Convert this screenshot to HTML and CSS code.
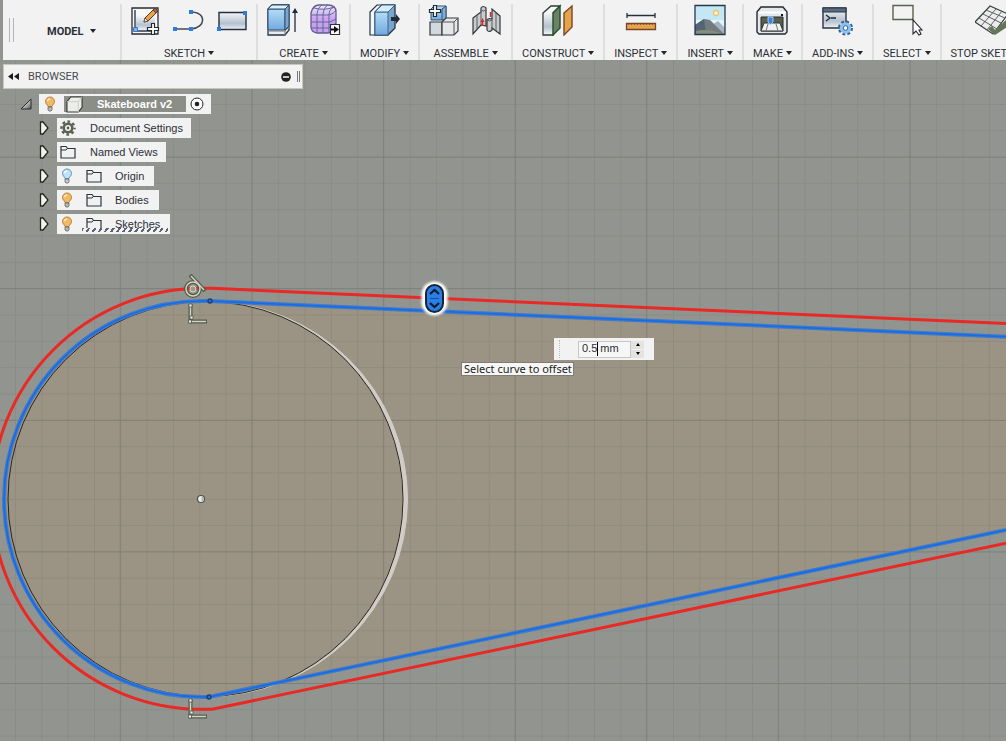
FILE: index.html
```html
<!DOCTYPE html>
<html lang="en">
<head>
<meta charset="utf-8">
<title>Skateboard v2</title>
<link rel="stylesheet" href="styles.css">
</head>
<body>
<svg class="defs" aria-hidden="true">
  <defs>
    <linearGradient id="steel" x1="0" y1="0" x2="0" y2="1"><stop offset="0" stop-color="#f4f6f8"/><stop offset=".65" stop-color="#b4c1ce"/><stop offset="1" stop-color="#eef2f5"/></linearGradient>
    <linearGradient id="blue" x1="0" y1="0" x2="0" y2="1"><stop offset="0" stop-color="#b4dcf5"/><stop offset="1" stop-color="#71aade"/></linearGradient>
    <linearGradient id="violet" x1="0" y1="0" x2="0" y2="1"><stop offset="0" stop-color="#f0e6fb"/><stop offset=".5" stop-color="#cba0ef"/><stop offset="1" stop-color="#c99df0"/></linearGradient>
    <linearGradient id="corner" x1="0" y1="0" x2="1" y2="1"><stop offset=".3" stop-color="#eee"/><stop offset="1" stop-color="#555"/></linearGradient>
    <symbol id="caret" viewBox="0 0 6 4"><path d="M0 0h6L3 4z" fill="#23262b"/></symbol>
    <symbol id="expand" viewBox="0 0 11 14"><path d="M1.500 1h2.500l5 6-5 6H1.500z" fill="#f2f2ec" stroke="#25261f" stroke-width="1.300"/></symbol>
    <symbol id="folder" viewBox="0 0 16 14"><path d="M1 13V1.500h5l1.500 2H15V13z" fill="#eef2f0" stroke="#30343e" stroke-width="1.200"/><path d="M1 5h5l1.500-1.500" fill="none" stroke="#30343e"/></symbol>
    <symbol id="bulb" viewBox="0 0 12 16"><path d="M6 1a4.500 4.500 0 0 0-4.500 4.500c0 2.300 2 3 2.500 5h4c.5-2 2.500-2.700 2.500-5A4.500 4.500 0 0 0 6 1z" fill="#f3b862" stroke="#b9803c"/><path d="M3.500 5Q4 3 6 3" fill="none" stroke="#fff2d5" stroke-width="1.500"/><path d="M4 11h4v3l-1 1H5l-1-1z" fill="#b8b8b8" stroke="#666" stroke-width=".8"/></symbol>
    <symbol id="bulb-off" viewBox="0 0 12 16"><path d="M6 1a4.500 4.500 0 0 0-4.500 4.500c0 2.300 2 3 2.500 5h4c.5-2 2.500-2.700 2.500-5A4.500 4.500 0 0 0 6 1z" fill="#bfe3fa" stroke="#5f93b8"/><path d="M3.500 5Q4 3 6 3" fill="none" stroke="#fff" stroke-width="1.500"/><path d="M4 11h4v3l-1 1H5l-1-1z" fill="#c8c8c8" stroke="#666" stroke-width=".8"/></symbol>
  </defs>
</svg>

<header class="toolbar">
  <div class="mode">
    <span class="grip"></span>
    <button class="mode-button" type="button">MODEL <svg class="caret"><use href="#caret"/></svg></button>
  </div>

  <div class="group">
    <div class="tools">
      <button class="tool" type="button" aria-label="Create sketch"><svg viewBox="0 0 32 32">
        <path d="M2 4h26v26H2z" fill="#f7f8f8" stroke="#2a2c30" stroke-width="1.300"/><path d="M6 12h19v14H6z" fill="url(#steel)"/><path d="M5 6v21h16" fill="none" stroke="#2c3b55" stroke-width="1.400"/><path d="M3.500 23.500h4v4h-4z" fill="#7fb2ee" stroke="#3877cf"/>
        <path d="M14 18l1-4L25 4l3 3-10 10z" fill="#e7a548" stroke="#4b3621"/><path d="M14 18l1-4 3 3z" fill="#fff2df" stroke="#4b3621" stroke-width=".7"/><path d="M23 6l2-2 3 3-2 2z" fill="#9d6559" stroke="#59322c" stroke-width=".8"/>
        <path d="M21.500 19.500h3v4h4v3h-4v4h-3v-4h-4v-3h4z" fill="#fff" stroke="#24272c" stroke-width="1.200"/></svg></button>
      <button class="tool" type="button" aria-label="Line"><svg viewBox="0 0 32 32">
        <path d="M2 25h16c15-1 16-17 0-17" fill="none" stroke="#414955" stroke-width="1.500"/><path d="M0 23h4v4H0zM16 23h4v4h-4zM16 6h4v4h-4z" fill="#2b7be0"/></svg></button>
      <button class="tool" type="button" aria-label="Rectangle"><svg viewBox="0 0 32 32">
        <path d="M3 8.500h27v17H3z" fill="url(#steel)" stroke="#26303c" stroke-width="1.400"/><path d="M1 23h4v4H1zM27 7h4v4h-4z" fill="#2b7be0"/></svg></button>
    </div>
    <button class="label" type="button">SKETCH <svg class="caret"><use href="#caret"/></svg></button>
  </div>

  <div class="group">
    <div class="tools">
      <button class="tool" type="button" aria-label="Extrude"><svg viewBox="0 0 32 32">
        <path d="M2 5l4-4h17v25l-4 5H2z" fill="#e9edf0" stroke="#243348" stroke-width="1.300"/><path d="M2 5h17v21H2z" fill="url(#blue)" stroke="#2d4d70"/><path d="M2 5l4-4h17l-4 4z" fill="#dff1fb" stroke="#2d4d70"/><path d="M19 5l4-4v21l-4 4z" fill="#7ca5cc" stroke="#2d4d70"/><path d="M2 27h17v4M19 27l4-4" fill="none" stroke="#777"/>
        <path d="M29 28V6" stroke="#1f2c40" stroke-width="1.300"/><path d="M26 9l3-5 3 5z" fill="#1f2c40"/></svg></button>
      <button class="tool" type="button" aria-label="Create form"><svg viewBox="0 0 32 32">
        <path d="M2 9q2-8 8-8h9q8 0 8 7v12q0 8-8 9H8q-6-1-6-6z" fill="url(#violet)" stroke="#655a92" stroke-width="1.300"/><path d="M2 11h18q5-1 7-5M2 18h19l6-3M2 24h18l7-5M8 28V10q1-7 5-9M14 29V10q1-7 5-9M20 28V11q0-6 5-8M5 4q10 3 20-1" fill="none" stroke="#5c6b97"/>
        <path d="M21.500 20.500h9v10h-9z" fill="#fff" stroke="#2b303b" stroke-width="1.200"/><path d="M22 24.500h3v-2.500l5 3.500-5 3.500V26.500h-3z" fill="#111"/></svg></button>
    </div>
    <button class="label" type="button">CREATE <svg class="caret"><use href="#caret"/></svg></button>
  </div>

  <div class="group">
    <div class="tools">
      <button class="tool" type="button" aria-label="Press pull"><svg viewBox="0 0 32 32">
        <path d="M1 8l7-7h5v23l-6 7H1z" fill="#f5f6f6" stroke="#243348" stroke-width="1.200"/><path d="M6 8l7-7h13v23l-7 7H6z" fill="#79a5ce" stroke="#243348" stroke-width="1.300"/><path d="M6 8h13v23H6z" fill="url(#blue)" stroke="#3c668f"/><path d="M6 8l7-7h13l-7 7z" fill="#d5ecf9" stroke="#3c668f"/><path d="M22 13h5v-3l4 5-4 5v-3h-5z" fill="#222b38"/></svg></button>
    </div>
    <button class="label" type="button">MODIFY <svg class="caret"><use href="#caret"/></svg></button>
  </div>

  <div class="group">
    <div class="tools">
      <button class="tool" type="button" aria-label="New component"><svg viewBox="0 0 32 32">
        <path d="M3 5l3-3h12v14H3z" fill="url(#blue)" stroke="#33506e"/><path d="M14 5l4-3v14h-4z" fill="#81add6" stroke="#33506e"/><path d="M2 18h12v13H2z" fill="#d3d8dc" stroke="#343b42" stroke-width="1.200"/><path d="M14 18l4-4h12v13l-4 4H14z" fill="#e5e7e8" stroke="#343b42" stroke-width="1.200"/><path d="M14 18h12v13M26 18l4-4" fill="none" stroke="#555"/>
        <path d="M5.500 1.500h3v4h4v3h-4v4h-3v-4h-4v-3h4z" fill="#fff" stroke="#24272c" stroke-width="1.200"/></svg></button>
      <button class="tool" type="button" aria-label="Joint"><svg viewBox="0 0 32 32">
        <path d="M2 14l8-6V4q2-3 5 0v18l-5-1-8 9z" fill="#c9cccd" stroke="#34383c" stroke-width="1.200"/><path d="M6 11v15M10 8v13M15 6q-3 2-5 0" fill="none" stroke="#5a5e61"/><path d="M29 12l-8-7v10q-4-1-5 1v10q2 3 5 0v-2l8 6z" fill="#c9cccd" stroke="#34383c" stroke-width="1.200"/><path d="M21 14v10M25 9v18M16 16q3 2 5 0" fill="none" stroke="#5a5e61"/><path d="M11.500 22v-5M19.500 13V8" stroke="#e12626" stroke-width="1.500"/><path d="M9.500 18l2-4 2 4z" fill="#e12626"/></svg></button>
    </div>
    <button class="label" type="button">ASSEMBLE <svg class="caret"><use href="#caret"/></svg></button>
  </div>

  <div class="group">
    <div class="tools">
      <button class="tool" type="button" aria-label="Offset plane"><svg viewBox="0 0 32 32">
        <path d="M1 9l8-7h9l-7 7v22H1z" fill="#f6f7f7" stroke="#2d3831" stroke-width="1.300"/><path d="M2 9h9v21H2z" fill="url(#steel)"/><path d="M11 9l7-7v22l-7 7z" fill="#6f8068" stroke="#245528" stroke-width="1.500"/><path d="M22 9l8-7v21l-8 8z" fill="#e4a449" stroke="#7e432c" stroke-width="1.400"/></svg></button>
    </div>
    <button class="label" type="button">CONSTRUCT <svg class="caret"><use href="#caret"/></svg></button>
  </div>

  <div class="group">
    <div class="tools">
      <button class="tool" type="button" aria-label="Measure"><svg viewBox="0 0 32 32">
        <path d="M2 11.500h28M2 9v5M30 9v5" fill="none" stroke="#29303a" stroke-width="1.300"/><path d="M1.500 19.500h29v6h-29z" fill="#e5a64b" stroke="#7b432b" stroke-width="1.300"/><path d="M3 20.500h27" stroke="#8d552f" stroke-dasharray="1 2"/></svg></button>
    </div>
    <button class="label" type="button">INSPECT <svg class="caret"><use href="#caret"/></svg></button>
  </div>

  <div class="group">
    <div class="tools">
      <button class="tool" type="button" aria-label="Insert image"><svg viewBox="0 0 32 32">
        <path d="M1 1.500h30v29H1z" fill="#c4e7f5"/><path d="M2 16h28v10H2z" fill="#e4f5fa"/><circle cx="22" cy="9" r="2.500" fill="#fff6d8" stroke="#f1c36b" stroke-width="1.300"/><path d="M16 22l8-5 7 7v7H16z" fill="#a8b4bf"/><path d="M1 21l9-6 6 1 14 14H1z" fill="#737b82"/><path d="M1 21l9-6 2 15H1z" fill="#536477"/><path d="M2 27q12-3 27 3H2z" fill="#849077"/><path d="M1 1.500h30v29H1z" fill="none" stroke="#27384d" stroke-width="1.300"/></svg></button>
    </div>
    <button class="label" type="button">INSERT <svg class="caret"><use href="#caret"/></svg></button>
  </div>

  <div class="group">
    <div class="tools">
      <button class="tool" type="button" aria-label="3D print"><svg viewBox="0 0 32 32">
        <path d="M1 8l4-5h22l4 5v20l-2 2H3l-2-2z" fill="#e5e8ea" stroke="#252a31" stroke-width="1.400"/><path d="M2 8.500h28" stroke="#fff" stroke-width="2"/><path d="M25 10h2v2h-2z" fill="#111"/><path d="M5 13h22v14H5z" fill="#56604f" stroke="#24282b"/><path d="M8 19h16l3 8H5z" fill="#eef1f2" stroke="#333"/><path d="M12 20l-2 7M20 20l2 7" stroke="#777"/><path d="M12 13h5v5l-2.500 3-2.500-3z" fill="#3687e5" stroke="#d4eaff" stroke-width=".7"/></svg></button>
    </div>
    <button class="label" type="button">MAKE <svg class="caret"><use href="#caret"/></svg></button>
  </div>

  <div class="group">
    <div class="tools">
      <button class="tool" type="button" aria-label="Scripts and add-ins"><svg viewBox="0 0 32 32">
        <path d="M2 4h23v20H2z" fill="url(#steel)" stroke="#2b3542" stroke-width="1.400"/><path d="M2 4h23v4H2z" fill="#5b6c82" stroke="#2b3542"/><path d="M5 11l4 3-4 3M10 14h5" fill="none" stroke="#1e2a3a" stroke-width="1.300"/><circle cx="24.500" cy="24" r="6" fill="none" stroke="#315f91" stroke-width="3" stroke-dasharray="2.700 2"/><circle cx="24.500" cy="24" r="4" fill="#eef6fc" stroke="#8cc3f1" stroke-width="3.500"/><circle cx="24.500" cy="24" r="2.300" fill="#fff" stroke="#315f91"/></svg></button>
    </div>
    <button class="label" type="button">ADD-INS <svg class="caret"><use href="#caret"/></svg></button>
  </div>

  <div class="group">
    <div class="tools">
      <button class="tool" type="button" aria-label="Select"><svg viewBox="0 0 32 32">
        <path d="M2 1.500h20v14H2z" fill="#f3f4f1" stroke="#5a6153" stroke-width="1.400"/><path d="M22 16v14l3-3 3 4 2-1-2-4h3z" fill="#fff" stroke="#24272c" stroke-width="1.100"/></svg></button>
    </div>
    <button class="label" type="button">SELECT <svg class="caret"><use href="#caret"/></svg></button>
  </div>

  <div class="group">
    <div class="tools">
      <button class="tool" type="button" aria-label="Stop sketch"><svg viewBox="0 0 32 32">
        <path d="M0 18L15 2l18 8-15 20z" fill="#ecedec" stroke="#3d4140" stroke-width="1.200"/><path d="M4 14l18 11M8 10l18 9M11 6l19 8M6 22L21 5M12 26L27 7" stroke="#5d6260" fill="none"/><path d="M13 25l4-3 3 4 12-11v8L20 31z" fill="#63755a"/></svg></button>
    </div>
    <button class="label" type="button">STOP SKETCH <svg class="caret"><use href="#caret"/></svg></button>
  </div>
</header>

<main class="workspace">
  <svg class="scene" viewBox="0 60 1006 681" preserveAspectRatio="xMinYMin slice" aria-label="Sketch canvas">
    <defs>
      <pattern id="minor" width="26.320" height="26.320" x="15" y="25" patternUnits="userSpaceOnUse"><path d="M0 .5h26.320M.5 0v26.320" stroke="#50554d" stroke-opacity=".13" fill="none"/></pattern>
      <pattern id="major" width="131.600" height="131.600" x="119.700" y="25" patternUnits="userSpaceOnUse"><path d="M0 .5h131.600M.5 0v131.600" stroke="#454a42" stroke-opacity=".2" fill="none"/></pattern>
      <filter id="glow" x="-50%" y="-50%" width="200%" height="200%"><feGaussianBlur stdDeviation="1"/></filter>
    </defs>
    <path d="M1006 337L209 301h-7a198 198 0 0 0 0 396h7l797-167z" fill="#9b9384"/>
    <rect y="60" width="1006" height="681" fill="url(#minor)"/>
    <rect y="60" width="1006" height="681" fill="url(#major)"/>
    <path d="M207 301.500A200.500 197.500 0 0 1 207 696.500A196 197.500 0 0 0 207 301.500z" fill="#d1ccc5" stroke="#d1ccc5"/>
    <circle cx="205.500" cy="499" r="197.500" fill="none" stroke="#2c241c"/>
    <path d="M1006 323.500L212 288.300h-10a210.500 210.500 0 0 0 0 421h10l794-166" fill="none" stroke="#e92925" stroke-width="3"/>
    <path d="M1006 336.700L209 301h-7a198 198 0 0 0 0 396h7l797-167" fill="none" stroke="#427bc2" stroke-width="4"/>
    <path d="M1006 336.700L209 301h-7a198 198 0 0 0 0 396h7l797-167" fill="none" stroke="#126bf2" stroke-width="1.500"/>
    <circle cx="201" cy="499" r="3.500" fill="#eee" stroke="#4f5148" stroke-width="1.200"/>
    <path d="M201.500 496.500v5a2.500 2.500 0 0 0 0-5z" fill="#b5b5b0"/>
    <g fill="none" stroke="#1d3d70" stroke-width="1.300"><circle cx="210" cy="301" r="2"/><circle cx="209" cy="697" r="2"/></g>
    <g fill="none" stroke="#535a48" stroke-width="4"><circle cx="193" cy="289" r="7"/><path d="M190 275l15 16"/></g>
    <g fill="none" stroke="#d2d4c4" stroke-width="1.500"><circle cx="193" cy="289" r="7"/><path d="M191 276l13 14"/></g>
    <circle cx="193" cy="289" r="3" fill="#9a9990" stroke="#d2d4c4"/>
    <g id="perp"><path d="M190.500 304v19M189 321.500h18" fill="none" stroke="#555b4b" stroke-width="4"/><path d="M190.500 305v14M192 321.500h14" fill="none" stroke="#d2d4c4" stroke-width="1.500"/><path d="M189 304h3v3h-3zM190 316h3v3h-3zM188.500 320h3v3h-3z" fill="#eee" stroke="#555b4b" stroke-width=".8"/></g>
    <use href="#perp" y="395"/>
    <rect x="421.500" y="281.500" width="26" height="34" rx="13" fill="#fff" filter="url(#glow)"/>
    <rect x="426" y="285" width="17" height="27" rx="8.500" fill="#2a7ee6" stroke="#172638" stroke-width="2"/>
    <path d="M430 294l4.500-4 4.500 4M430 303l4.500 4 4.500-4" fill="none" stroke="#101b2b" stroke-width="2.200"/><path d="M430 298.500h9" stroke="#1a4e91"/>
  </svg>

  <section class="browser">
    <div class="browser-head">
      <svg class="rewind" viewBox="0 0 11 7"><path d="M5 0v7L0 3.500zM11 0v7L6 3.500z" fill="#1c1c1c"/></svg>
      <h2 class="browser-title">BROWSER</h2>
      <button class="minimise" type="button" aria-label="Minimise"><svg viewBox="0 0 10 10"><circle cx="5" cy="5" r="4.800" fill="#222"/><path d="M2 5h6" stroke="#fff" stroke-width="1.500"/></svg></button>
      <span class="resize"></span>
    </div>
    <ul class="tree">
      <li class="row root">
        <svg class="open" viewBox="0 0 12 12"><path d="M11 1v10H1z" fill="url(#corner)" stroke="#2a2a2a"/></svg>
        <div class="item">
          <svg class="bulb"><use href="#bulb"/></svg>
          <span class="selected"><svg class="cube" viewBox="0 0 18 18"><path d="M1 6l4-5h12v11l-4 5H1z" fill="#eceeea" stroke="#35383a" stroke-width="1.200"/><path d="M1 6h12v11M13 6l4-5" fill="none" stroke="#c9ccc8"/></svg><span class="document">Skateboard v2</span></span>
          <svg class="radio" viewBox="0 0 14 14"><circle cx="7" cy="7" r="6" fill="#fff" stroke="#222"/><circle cx="7" cy="7" r="2.300" fill="#222"/></svg>
        </div>
      </li>
      <li class="row"><svg class="expand"><use href="#expand"/></svg><div class="item"><svg class="gear" viewBox="0 0 16 16"><circle cx="8" cy="8" r="6.500" fill="none" stroke="#5b6354" stroke-width="2.500" stroke-dasharray="2.600 2.505" stroke-dashoffset="1.300"/><circle cx="8" cy="8" r="4.300" fill="#f2f2f2" stroke="#5b6354" stroke-width="2.600"/><circle cx="8" cy="8" r="1.400" fill="#5b6354"/></svg><span>Document Settings</span></div></li>
      <li class="row"><svg class="expand"><use href="#expand"/></svg><div class="item"><svg class="folder"><use href="#folder"/></svg><span>Named Views</span></div></li>
      <li class="row"><svg class="expand"><use href="#expand"/></svg><div class="item lit"><svg class="bulb"><use href="#bulb-off"/></svg><svg class="folder"><use href="#folder"/></svg><span>Origin</span></div></li>
      <li class="row"><svg class="expand"><use href="#expand"/></svg><div class="item lit"><svg class="bulb"><use href="#bulb"/></svg><svg class="folder"><use href="#folder"/></svg><span>Bodies</span></div></li>
      <li class="row"><svg class="expand"><use href="#expand"/></svg><div class="item lit active"><svg class="bulb"><use href="#bulb"/></svg><svg class="folder"><use href="#folder"/></svg><span>Sketches</span></div></li>
    </ul>
  </section>

  <div class="offset">
    <span class="dots"></span>
    <div class="field">
      <input class="value" type="text" value="0.5 mm" aria-label="Offset distance"><span class="cursor"></span>
    </div>
    <div class="spin">
      <button class="step" type="button" aria-label="Increase"><svg viewBox="0 0 4 3"><path d="M0 3h4L2 0z"/></svg></button>
      <button class="step" type="button" aria-label="Decrease"><svg viewBox="0 0 4 3"><path d="M0 0h4L2 3z"/></svg></button>
    </div>
  </div>
  <div class="tooltip" role="tooltip">Select curve to offset</div>
</main>
</body>
</html>
```
FILE: styles.css
```css
* { box-sizing: border-box; }

body {
  margin: 0;
  min-height: 100vh;
  display: flex;
  flex-direction: column;
  overflow: hidden;
  background: #92958f;
  color: #2b2f36;
  font-family: "Liberation Sans", Arial, sans-serif;
  font-size: 11px;
}

button {
  margin: 0;
  padding: 0;
  border: 0;
  background: none;
  color: inherit;
  font: inherit;
}

svg { display: block; flex: none; }
.defs { position: absolute; width: 0; height: 0; }

/* Toolbar */
.toolbar {
  display: flex;
  margin-left: 3px;
  padding: 4px 0 0;
  overflow: hidden;
  background: #f2f2f2;
  font-family: Roboto, sans-serif;
}

.mode {
  flex: none;
  display: flex;
  align-items: center;
  width: 117px;
  padding: 0 0 4px 6px;
}

.grip {
  width: 5px;
  height: 24px;
  border: solid #b4b4b4;
  border-width: 0 1px;
}

.mode-button {
  display: flex;
  align-items: center;
  gap: 6px;
  margin-left: 33px;
  padding-top: 2px;
  font-weight: 700;
}

.group {
  flex: none;
  display: flex;
  flex-direction: column;
  align-items: center;
  gap: 8px;
  padding: 0 8px;
  border-left: 2px solid #dedede;
}

.tools { display: flex; gap: 11px; }
.tool svg { width: 32px; height: 32px; }

.label {
  display: flex;
  align-items: center;
  gap: 3px;
  height: 16px;
  padding: 2px 1px 0;
  white-space: nowrap;
}

.caret { width: 6px; height: 4px; }

/* Canvas */
.workspace {
  position: relative;
  flex: 1;
  overflow: hidden;
  padding: 4px 3px;
}

.scene {
  position: absolute;
  inset: 0;
  width: 100%;
  height: 100%;
}

/* Browser panel */
.browser { position: relative; width: 300px; }

.browser-head {
  display: flex;
  align-items: center;
  height: 25px;
  padding: 0 2px 0 4px;
  border: 1px solid #c9c6bb;
  background: #f2f2f2;
}

.rewind { width: 11px; height: 7px; }

.browser-title {
  flex: 1;
  margin: 0 0 0 9px;
  color: #4a4c4e;
  font-family: Roboto, sans-serif;
  font-size: 11px;
  font-weight: 400;
}

.minimise svg { width: 10px; height: 10px; }

.resize {
  width: 3px;
  height: 11px;
  margin-left: 6px;
  border: solid #777;
  border-width: 0 1px;
}

.tree {
  display: flex;
  flex-direction: column;
  gap: 4px;
  margin: 5px 0 0;
  padding: 0;
  list-style: none;
}

.row {
  display: flex;
  align-items: center;
  gap: 7px;
  padding-left: 36px;
}

.root { padding-left: 17px; }
.open { width: 12px; height: 12px; }
.expand { width: 11px; height: 14px; }

.item {
  display: flex;
  align-items: center;
  gap: 14px;
  height: 20px;
  padding: 0 8px 0 3px;
  background: #f2f2f2;
}

.lit { gap: 13px; padding: 0 10px 0 4px; }
.root .item { gap: 4px; padding: 0 7px 0 5px; }
.root .bulb { margin-right: 4px; }

.bulb { width: 12px; height: 16px; }
.gear { width: 16px; height: 16px; }
.folder { width: 16px; height: 14px; }
.cube { width: 17px; height: 17px; }
.radio { width: 14px; height: 14px; }

.selected {
  display: flex;
  align-items: center;
  gap: 14px;
  height: 16px;
  padding: 0 14px 0 2px;
  background: #8b8d87;
  color: #fff;
  font-weight: 700;
}

.active { position: relative; }
.active::after {
  content: "";
  position: absolute;
  right: 2px;
  bottom: 2px;
  left: 25px;
  height: 4px;
  background: repeating-linear-gradient(125deg, #5b6272 0 2px, #f2f2f2 2px 5px);
}

/* Floating offset input */
.offset {
  position: absolute;
  top: 278px;
  left: 554px;
  display: flex;
  align-items: center;
  width: 100px;
  height: 22px;
  padding-left: 5px;
  background: #f2f2f2;
}

.dots {
  width: 2px;
  height: 18px;
  margin-right: 17px;
  border-left: 1px dotted #bbb;
}

.field { position: relative; }

.value {
  display: block;
  width: 53px;
  height: 17px;
  padding: 0 3px 2px;
  border: 1px solid #c6c6c2;
  background: #f6f6f6;
  color: #2b2f36;
  font: inherit;
}

.cursor {
  position: absolute;
  top: 1px;
  left: 19px;
  width: 1px;
  height: 14px;
  background: #000;
}

.spin { display: flex; flex-direction: column; gap: 1px; }

.step {
  display: grid;
  place-items: center;
  width: 13px;
  height: 8px;
  background: #e3e3e0;
}

.step svg { width: 4px; height: 3px; }

.tooltip {
  position: absolute;
  top: 302px;
  left: 461px;
  padding: 0 1px 0 2px;
  border: 1px solid #7c7c78;
  background: #f6f6f4;
  color: #1d1d1d;
  font-family: "Noto Sans", sans-serif;
  font-size: 11px;
  line-height: 12px;
  white-space: nowrap;
}
```
